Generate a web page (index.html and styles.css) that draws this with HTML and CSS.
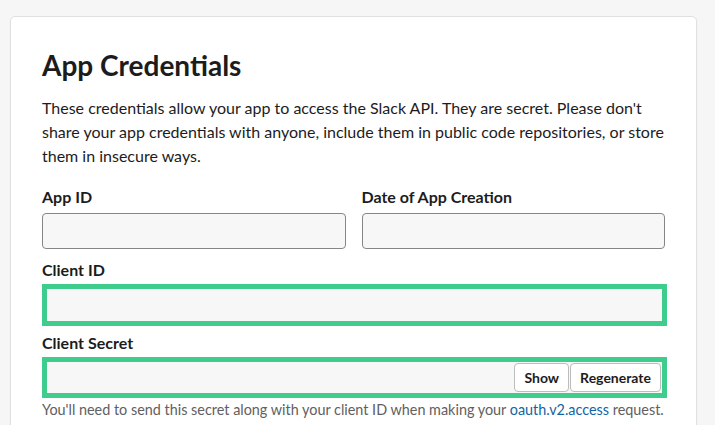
FILE: index.html
```html
<!DOCTYPE html>
<html>
<head>
<meta charset="utf-8">
<link rel="stylesheet" href="styles.css">
</head>
<body>
<div class="card">
  <h1 class="title">App Credentials</h1>
  <p class="intro">These credentials allow your app to access the Slack API. They are secret. Please don't share your app credentials with anyone, include them in public code repositories, or store them in insecure ways.</p>
  <div class="row">
    <div class="field">
      <label class="label">App ID</label>
      <div class="input"></div>
    </div>
    <div class="field">
      <label class="label">Date of App Creation</label>
      <div class="input"></div>
    </div>
  </div>
  <div class="field field-client">
    <label class="label label-hl">Client ID</label>
    <div class="input hl"></div>
  </div>
  <div class="field field-secret">
    <label class="label label-hl">Client Secret</label>
    <div class="input hl secret">
      <button class="btn">Show</button><button class="btn">Regenerate</button>
    </div>
    <p class="help">You'll need to send this secret along with your client ID when making your <a class="link">oauth.v2.access</a> request.</p>
  </div>
</div>
</body>
</html>
```

FILE: styles.css
```css
html, body {
  margin: 0;
  padding: 0;
  background: #f6f6f6;
  font-family: Lato, "Open Sans", sans-serif;
  color: #1d1c1d;
}
body {
  padding: 16px 18px 0 10px;
  height: 425px;
  box-sizing: border-box;
  overflow: hidden;
}
.card {
  background: #fff;
  border: 1px solid #e0e0e0;
  border-radius: 5px;
  padding: 31px 31px 40px 31px;
  box-shadow: 0 1px 2px rgba(0,0,0,0.04);
}
.title {
  margin: 0;
  font-size: 28px;
  font-weight: 700;
  line-height: 34px;
}
.intro {
  margin: 14px 0 0;
  font-size: 16px;
  line-height: 24px;
}
.row {
  display: grid;
  grid-template-columns: 1fr 1fr;
  column-gap: 16px;
  margin-top: 18px;
}
.field {
  display: flex;
  flex-direction: column;
}
.label {
  font-size: 16px;
  font-weight: 700;
  line-height: 22px;
  margin-bottom: 5px;
}
.label-hl {
  margin-bottom: 3px;
}
.field-client {
  margin-top: 10px;
}
.field-secret {
  margin-top: 6px;
}
.input {
  height: 36px;
  box-sizing: border-box;
  border: 1px solid #868686;
  border-radius: 4px;
  background: #f7f7f7;
}
.hl {
  width: 625px;
  height: 42px;
  border: 5px solid #3fcd8e;
  border-radius: 0;
}
.secret {
  height: 41px;
  display: flex;
  justify-content: flex-end;
  align-items: center;
  padding-right: 1px;
  gap: 1px;
}
.btn {
  height: 29px;
  box-sizing: border-box;
  border: 1px solid #bdbdbd;
  border-radius: 4px;
  background: #fff;
  font-family: Lato, sans-serif;
  font-size: 14px;
  font-weight: 700;
  color: #1d1c1d;
  padding: 0 9px;
}
.help {
  margin: 2px 0 0;
  font-size: 14.4px;
  line-height: 20px;
  color: #616061;
  white-space: nowrap;
}
.link {
  color: #1264a3;
  text-decoration: none;
}
```
